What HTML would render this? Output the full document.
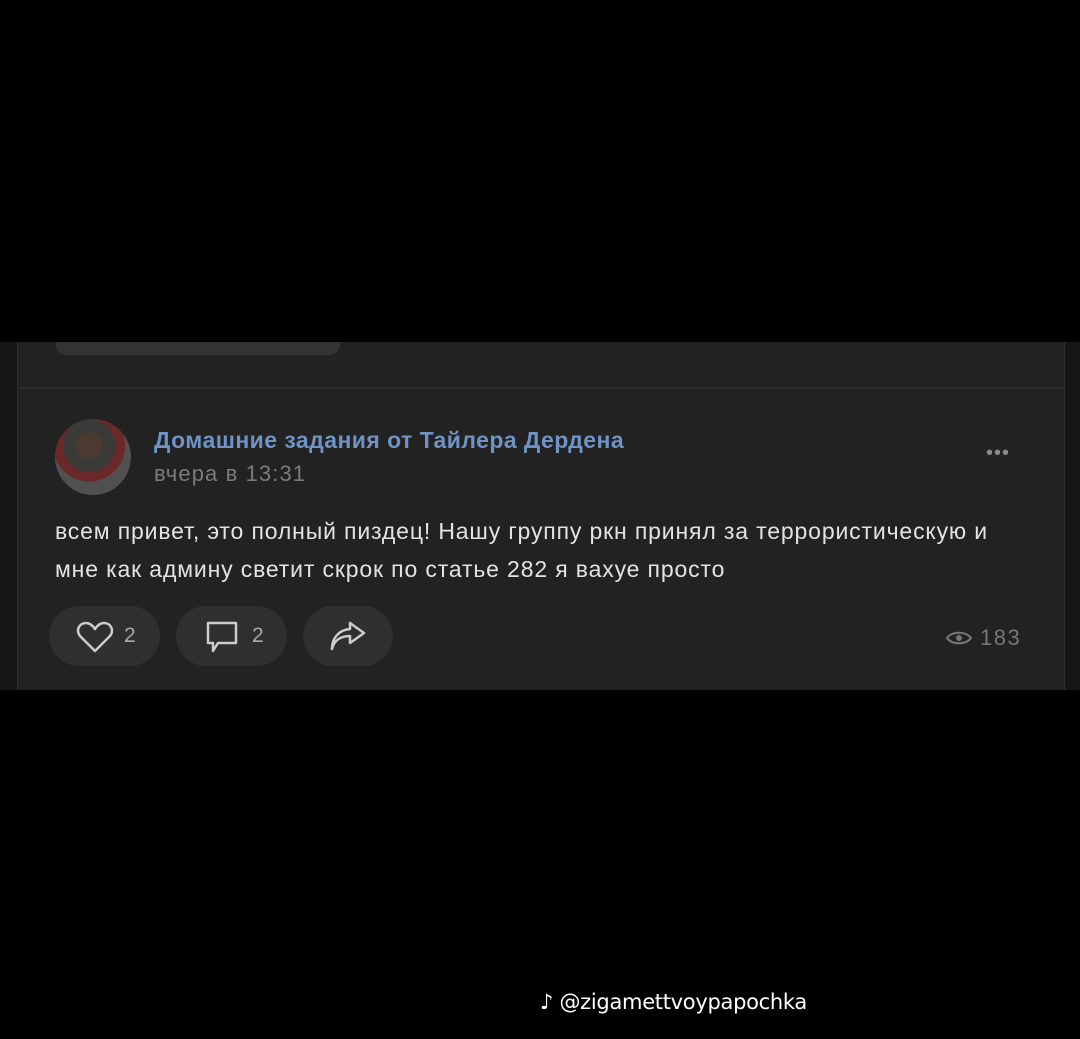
<!DOCTYPE html>
<html><head><meta charset="utf-8"><style>
body{margin:0;width:1080px;height:1039px;background:#000;position:relative;overflow:hidden;font-family:"Liberation Sans","DejaVu Sans",sans-serif}
.wrap{position:absolute;left:0;top:342px;width:1080px;height:348px;background:#161616}
.card{position:absolute;left:17px;top:0;width:1046px;height:348px;background:#222222;border-left:1px solid #2e2e2e;border-right:1px solid #2e2e2e}
.pill{position:absolute;left:38px;top:0;width:284px;height:13px;background:#333;border-radius:0 0 10px 10px}
.div{position:absolute;left:0;top:45px;width:1046px;height:2px;background:#2d2d2d}
.av{position:absolute;left:37px;top:77px;width:76px;height:76px;border-radius:50%;background:radial-gradient(circle at 45% 35%,#4a3a30 0 20%,#3a3a38 21% 40%,#6a2828 41% 55%,#505050 56%)}
.name{position:absolute;left:136px;top:85px;color:#6f93c4;font-size:23px;font-weight:bold;letter-spacing:0.45px;white-space:nowrap}
.time{position:absolute;left:136px;top:119px;color:#7b7b7b;font-size:22px;letter-spacing:1.1px}
.dots{position:absolute;left:968px;top:100px;color:#8a8a8a;font-size:20px;letter-spacing:1px}
.text{position:absolute;left:37px;top:170px;color:#e3e3e3;font-size:23px;line-height:38px;letter-spacing:0.85px;width:972px}
.btn{position:absolute;top:264px;height:60px;background:#2f2f2f;border-radius:30px}
.cnt{position:absolute;top:18px;color:#a8a8a8;font-size:21px}
.views{position:absolute;left:928px;top:283px;color:#777;font-size:22px;letter-spacing:1.5px}
.tt{position:absolute;left:540px;top:990px;color:#fff;font-size:21px;font-family:"DejaVu Sans",sans-serif;letter-spacing:-0.3px}
</style></head><body>
<div class="wrap"><div class="card">
<div class="pill"></div><div class="div"></div>
<div class="av"></div>
<div class="name">Домашние задания от Тайлера Дердена</div>
<div class="time">вчера в 13:31</div>
<div class="dots">•••</div>
<div class="text">всем привет, это полный пиздец! Нашу группу ркн принял за террористическую и мне как админу светит скрок по статье 282 я вахуе просто</div>
<div class="btn" style="left:31px;width:111px"><svg style="position:absolute;left:26px;top:15px" width="40" height="32" viewBox="0 0 40 32"><path d="M20 30 L6 16 C0 10 4 2 11 2 C15 2 18 5 20 8 C22 5 25 2 29 2 C36 2 40 10 34 16 Z" fill="none" stroke="#ccc" stroke-width="2.5" stroke-linejoin="round"/></svg><span class="cnt" style="left:75px">2</span></div>
<div class="btn" style="left:158px;width:111px"><svg style="position:absolute;left:28px;top:15px" width="36" height="34" viewBox="0 0 36 34"><path d="M4 2 H32 V22 H14 L9 30 V22 H4 Z" fill="none" stroke="#ccc" stroke-width="2.5" stroke-linejoin="round"/></svg><span class="cnt" style="left:76px">2</span></div>
<div class="btn" style="left:285px;width:90px"><svg style="position:absolute;left:25px;top:15px" width="40" height="32" viewBox="0 0 40 32"><path d="M4 28 C6 20 12 15 22 15 V22 L36 12 L22 2 V8 C10 9 4 18 4 28 Z" fill="none" stroke="#ccc" stroke-width="2.5" stroke-linejoin="round"/></svg></div>
<div class="views"><svg width="26" height="16" viewBox="0 0 26 16" style="vertical-align:-1px;margin-right:8px"><path d="M1 8 C6 1 20 1 25 8 C20 15 6 15 1 8 Z" fill="none" stroke="#777" stroke-width="2"/><circle cx="13" cy="8" r="3" fill="#777"/></svg>183</div>
</div></div>
<div class="tt">♪ @zigamettvoypapochka</div>
</body></html>
